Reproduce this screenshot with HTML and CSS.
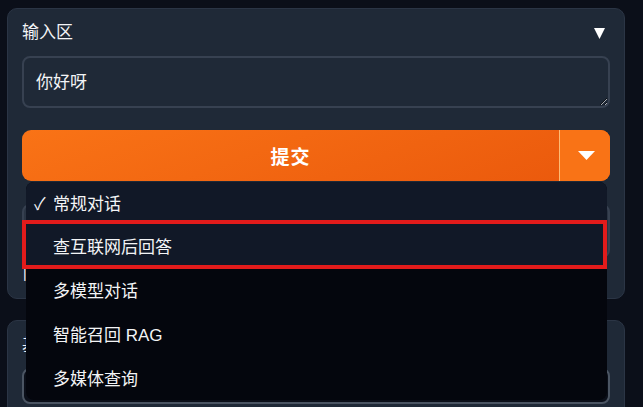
FILE: index.html
```html
<!DOCTYPE html>
<html lang="zh">
<head>
<meta charset="utf-8">
<title>输入区</title>
<link rel="stylesheet" href="styles.css">
</head>
<body>
<div class="page">
  <section class="panel panel-input">
    <div class="panel-head">
      <span class="panel-title">输入区</span>
      <svg class="caret" width="11" height="11" viewBox="0 0 11 11"><polygon points="0,0 11,0 5.5,11" fill="#ffffff"/></svg>
    </div>
    <textarea class="textbox">你好呀</textarea>
    <div class="submit-wrap">
      <div class="submit">
        <button class="submit-main">提交</button>
        <button class="submit-arrow" aria-label="展开">
          <svg width="17" height="9" viewBox="0 0 17 9"><polygon points="0,0 17,0 8.5,9" fill="#ffffff"/></svg>
        </button>
      </div>
      <ul class="menu">
        <li class="menu-item sel first"><span class="check">✓</span>常规对话</li>
        <li class="menu-item sel marked">查互联网后回答</li>
        <li class="menu-item">多模型对话</li>
        <li class="menu-item">智能召回 RAG</li>
        <li class="menu-item">多媒体查询</li>
      </ul>
    </div>
    <div class="hidden-box"></div>
    <div class="hidden-line">|</div>
  </section>
  <section class="panel panel-second">
    <div class="panel-title">基本参数</div>
    <div class="second-box"></div>
  </section>
</div>
</body>
</html>
```
FILE: styles.css
```css
* { box-sizing: border-box; }
html, body {
  margin: 0;
  padding: 0;
  background: #0b0f19;
  overflow: hidden;
  height: 407px;
}
body {
  font-family: "Liberation Sans", "Noto Sans CJK SC", sans-serif;
  color: #f3f4f6;
}
.page {
  padding: 8px 18px 0 7px;
  display: flex;
  flex-direction: column;
  gap: 21px;
}
.panel {
  background: #1f2937;
  border: 1px solid #2b3545;
  border-radius: 10px;
  padding: 13px 14px 0 14px;
}
.panel-input {
  height: 291px;
  display: flex;
  flex-direction: column;
}
.panel-head {
  height: 22px;
  display: flex;
  align-items: center;
  justify-content: space-between;
  padding-right: 5px;
}
.panel-title {
  font-size: 17px;
  line-height: 22px;
}
.caret { display: block; }
.textbox {
  margin-top: 12px;
  height: 52px;
  width: 100%;
  background: #1f2937;
  border: 2px solid #374151;
  border-radius: 8px;
  color: #f3f4f6;
  font-family: "Liberation Sans", "Noto Sans CJK SC", sans-serif;
  font-size: 17px;
  line-height: 20px;
  padding: 15px 12px 0;
  resize: vertical;
  outline: none;
  display: block;
}
.submit-wrap {
  margin-top: 22px;
  position: relative;
}
.submit {
  display: flex;
  height: 51px;
  border-radius: 9px;
  overflow: hidden;
  background: linear-gradient(160deg, #f97316 0%, #ea580c 100%);
}
.submit button {
  border: 0;
  background: transparent;
  color: #ffffff;
  font-family: "Liberation Sans", "Noto Sans CJK SC", sans-serif;
  padding: 0;
  cursor: pointer;
}
.submit-main {
  flex: 1;
  font-size: 19px;
  font-weight: 700;
  letter-spacing: 1px;
}
.submit-arrow {
  width: 51px;
  border-left: 1px solid #fdba74 !important;
  background: #f97316 !important;
  display: flex;
  align-items: center;
  justify-content: center;
}
.submit-arrow svg { display: block; margin-left: 2px; }
.menu {
  position: absolute;
  z-index: 5;
  top: 52px;
  left: 4px;
  width: 581px;
  margin: 0;
  padding: 0;
  list-style: none;
  background: #04060d;
  border-radius: 8px;
}
.menu-item {
  height: 44px;
  display: flex;
  align-items: center;
  padding: 0 0 1px 27px;
  font-size: 17px;
  color: #f3f4f6;
  position: relative;
}
.menu-item.first {
  height: 41px;
  border-radius: 8px 8px 0 0;
}
.menu-item.marked { height: 45px; }
.menu-item.sel { background: #111827; }
.check {
  width: 19px;
  margin-left: -19px;
  font-size: 17px;
}
.menu-item.marked::after {
  content: "";
  position: absolute;
  left: -4px;
  top: -3px;
  right: 0;
  bottom: -1px;
  border: 4px solid #e31b1b;
}
.hidden-box {
  margin-top: 23px;
  height: 54px;
  border: 2px solid #374151;
  background: #2a3443;
  border-radius: 8px;
}
.hidden-line {
  margin-top: 6px;
  font-size: 14px;
  line-height: 18px;
  padding-left: 1px;
}
.panel-second {
  height: 120px;
  padding-top: 14px;
}
.second-box {
  margin-top: 11px;
  height: 36px;
  border: 2px solid #4b5563;
  border-radius: 8px;
  background: #0b0f19;
}
```
